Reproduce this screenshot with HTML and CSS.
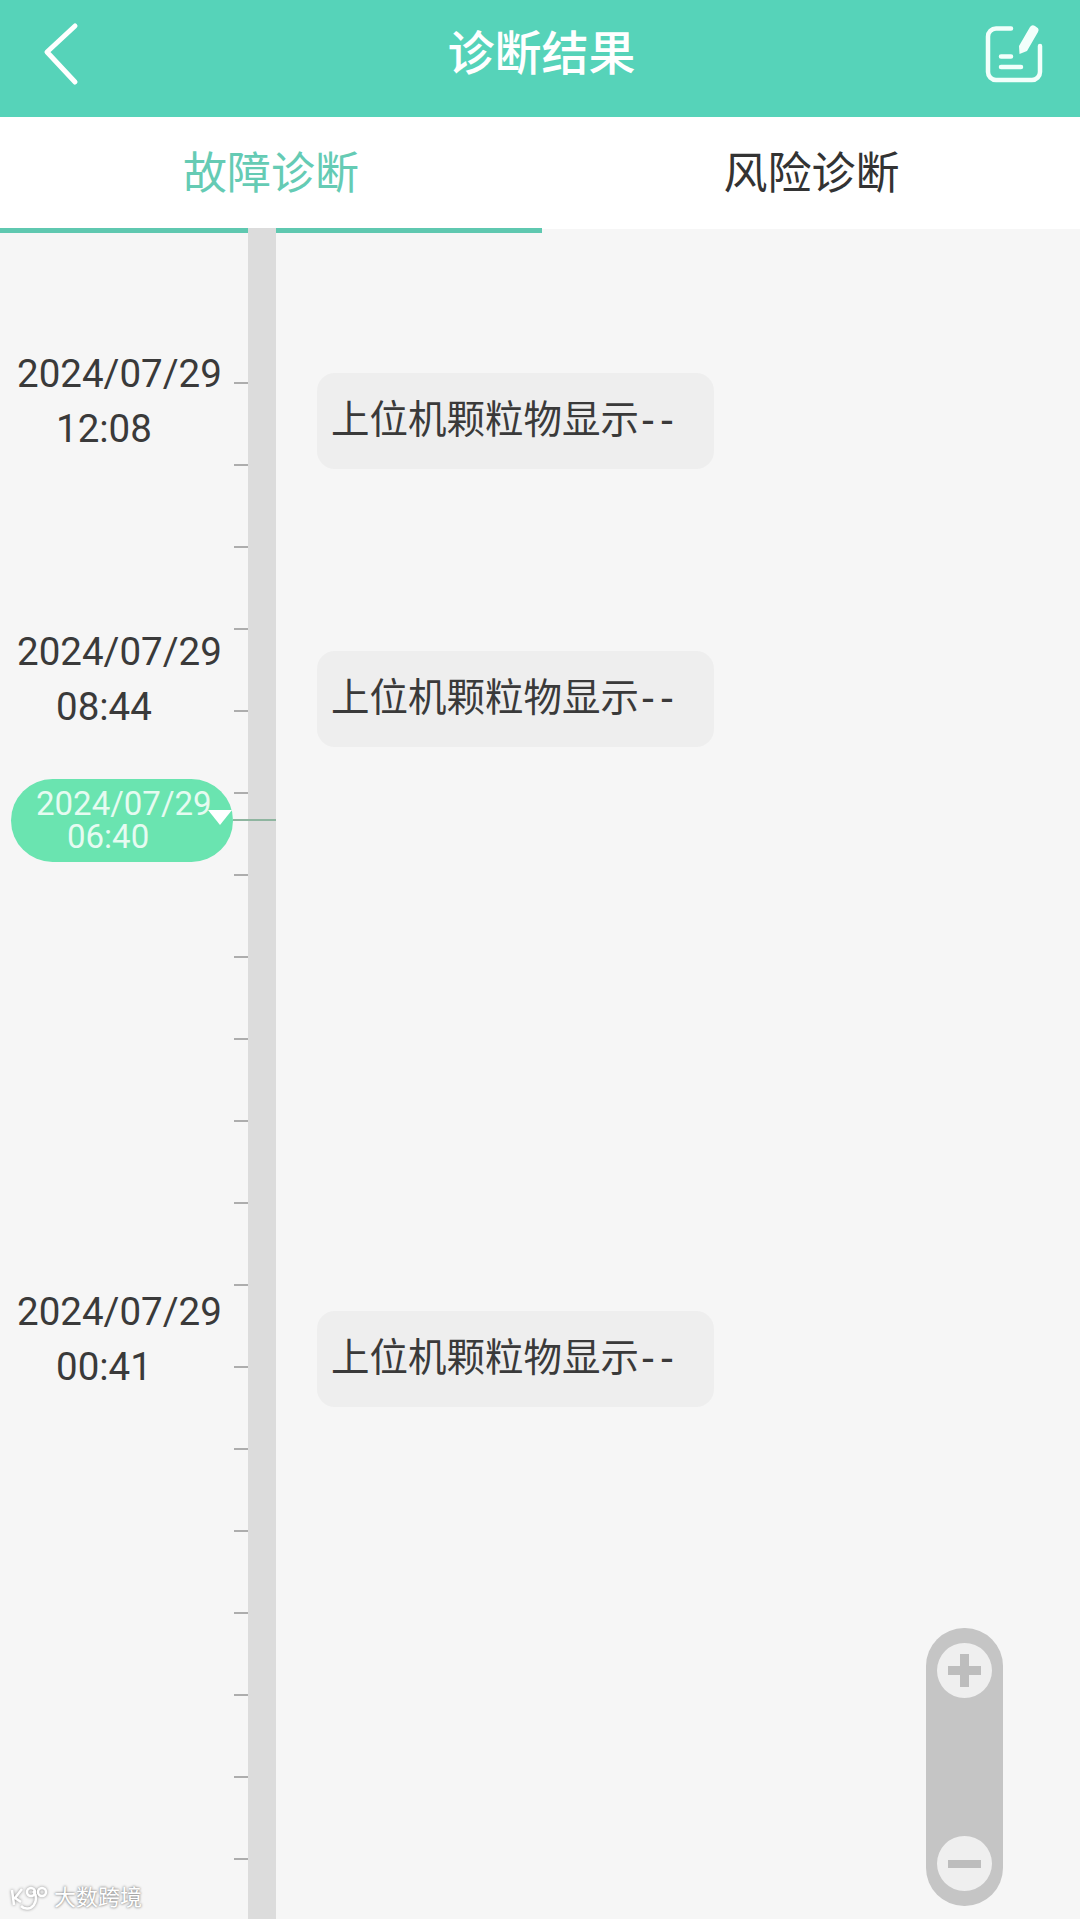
FILE: index.html
```html
<!DOCTYPE html>
<html lang="zh-CN">
<head>
<meta charset="utf-8">
<title>诊断结果</title>
<link rel="stylesheet" href="styles.css">
</head>
<body>
<div class="page">
  <header class="appbar">
    <svg class="back" viewBox="0 0 40 64" aria-hidden="true"><path d="M33 4 L5 30 L33 60"/></svg>
    <h1 class="title">诊断结果</h1>
    <svg class="note" viewBox="0 0 70 70" aria-hidden="true">
      <path class="stroke" d="M30 6.5 H15 a8 8 0 0 0 -8 8 V50 a8 8 0 0 0 8 8 H51 a8 8 0 0 0 8 -8 V24"/>
      <path class="stroke" d="M20 34.5 H30 M20 45 H40"/>
      <path class="fill" d="M38 24 L49 5 Q51 2 54 4 L56 5.500 Q58.500 7 57 10 L46 29 L38.500 32 Z"/>
    </svg>
  </header>
  <nav class="tabs">
    <div class="tab active">故障诊断</div>
    <div class="tab">风险诊断</div>
  </nav>
  <main class="timeline">
    <div class="rail">
      <div class="ticks">
        <i></i><i></i><i></i><i></i><i></i><i></i><i></i><i></i><i></i><i></i>
        <i></i><i></i><i></i><i></i><i></i><i></i><i></i><i></i><i></i>
      </div>
      <div class="bar"></div>
    </div>
    <div class="events">
      <section class="event first">
        <div class="when"><div>2024/07/29</div><div class="clock">12:08</div></div>
        <div class="bubble">上位机颗粒物显示<span class="dash">--</span></div>
      </section>
      <section class="event second">
        <div class="when"><div>2024/07/29</div><div class="clock">08:44</div></div>
        <div class="bubble">上位机颗粒物显示<span class="dash">--</span></div>
      </section>
      <section class="event third">
        <div class="when"><div>2024/07/29</div><div class="clock">00:41</div></div>
        <div class="bubble">上位机颗粒物显示<span class="dash">--</span></div>
      </section>
    </div>
    <div class="pill">
      <div>2024/07/29</div>
      <div class="pill-clock">06:40</div>
      <span class="pointer"></span>
    </div>
    <div class="cursor"></div>
    <div class="zoomer">
      <button class="zoom-btn"><span class="plus"></span></button>
      <button class="zoom-btn"><span class="minus"></span></button>
    </div>
    <div class="mark">
      <svg class="mark-logo" viewBox="0 0 40 26" aria-hidden="true">
        <path d="M3 5 L5 20 M13 4 L6 13 L12 17 M24 6 A8 9 0 1 1 12 21"/>
        <circle cx="22" cy="7" r="4"/>
        <circle cx="33" cy="7" r="4"/>
      </svg>
      <span>大数跨境</span>
    </div>
  </main>
</div>
</body>
</html>
```
FILE: styles.css
```css
* { box-sizing: border-box; }
html, body { margin: 0; padding: 0; }
body {
  width: 1080px;
  height: 1919px;
  overflow: hidden;
  background: #f6f6f6;
  font-family: Roboto, "Noto Sans CJK SC", sans-serif;
  color: #333;
}
.page { width: 1080px; height: 1919px; display: flex; flex-direction: column; overflow: hidden; }

.appbar {
  height: 117px;
  flex: none;
  background: #56d3b9;
  display: flex;
  align-items: center;
  justify-content: space-between;
  padding: 0 29px 0 42px;
  position: relative;
}
.back { width: 40px; height: 64px; margin-top: -9px; fill: none; stroke: #fff; stroke-width: 5; stroke-linecap: round; stroke-linejoin: round; }
.title {
  margin: -10px 0 0 20px;
  font-size: 47px;
  line-height: 60px;
  font-weight: 500;
  color: #fff;
}
.note { width: 70px; height: 70px; margin-top: -3px; }
.note .stroke { fill: none; stroke: #f2fffb; stroke-width: 4.5; stroke-linecap: round; stroke-linejoin: round; }
.note .fill { fill: #f2fffb; }

.tabs { height: 112px; flex: none; display: flex; align-items: flex-start; background: #fff; }
.tab {
  height: 116px;
  text-align: center;
  font-size: 44px;
  line-height: 114px;
  color: #333;
}
.tab.active { color: #65cbb4; border-bottom: 5px solid #5fc8b0; width: 542px; }
.tab:not(.active) { width: 538px; padding-left: 1px; }

.timeline { flex: 1; display: grid; position: relative; }
.rail, .events { grid-area: 1 / 1; }
.rail { display: flex; margin-top: -1px; padding-left: 234px; height: 1691px; }
.ticks { width: 14px; padding-top: 154px; display: flex; flex-direction: column; gap: 80px; }
.ticks i { display: block; height: 2px; flex: none; background: #adadad; }
.bar { width: 28px; background: #dcdcdc; }

.events { display: flex; flex-direction: column; }
.event { display: flex; justify-content: space-between; height: 96px; width: 714px; padding-left: 17px; }
.event.first { margin-top: 144px; }
.event.second { margin-top: 182px; }
.event.third { margin-top: 564px; }
.when { font-size: 38.5px; line-height: 55px; white-space: nowrap; margin-top: -27px; color: #3a3a3a; }
.clock { padding-left: 39px; }
.bubble {
  width: 397px;
  height: 96px;
  padding-left: 14px;
  border-radius: 18px;
  background: #eeeeee;
  font-size: 38.5px;
  line-height: 94px;
  white-space: nowrap;
  color: #3a3a3a;
}
.dash { font-family: "DejaVu Sans", sans-serif; letter-spacing: 5px; margin-left: 2px; }

.pill {
  position: absolute;
  left: 11px;
  top: 550px;
  width: 222px;
  height: 83px;
  padding: 8px 0 0 25px;
  border-radius: 42px;
  background: #6ae4b0;
  color: #e6fbf1;
  font-size: 33px;
  line-height: 33px;
  white-space: nowrap;
}
.pill-clock { padding-left: 31px; }
.pointer {
  position: absolute;
  right: 1px;
  top: 31px;
  width: 0;
  height: 0;
  border-left: 12px solid transparent;
  border-right: 12px solid transparent;
  border-top: 15px solid #fff;
}
.cursor { position: absolute; left: 233px; top: 590px; width: 43px; height: 2px; background: #8fb5a0; }

.zoomer {
  position: absolute;
  left: 926px;
  top: 1399px;
  width: 77px;
  height: 278px;
  padding: 15px 11px;
  border-radius: 38px;
  background: #c5c5c5;
  display: flex;
  flex-direction: column;
  justify-content: space-between;
}
.zoom-btn {
  width: 55px;
  height: 55px;
  padding: 0;
  border: 0;
  border-radius: 50%;
  background: #efefef;
  display: grid;
  place-items: center;
}
.plus, .minus { display: block; width: 33px; height: 8px; background: #bdbdbd; }
.plus { height: 33px; background:
  linear-gradient(#bdbdbd, #bdbdbd) center / 33px 9px no-repeat,
  linear-gradient(#bdbdbd, #bdbdbd) center / 9px 33px no-repeat; }

.mark {
  position: absolute;
  left: 9px;
  top: 1656px;
  display: flex;
  align-items: center;
  gap: 5px;
  font-size: 22px;
  line-height: 26px;
  color: #fff;
  text-shadow: 0 0 3px #8a8a8a, 0 0 2px #9a9a9a;
}
.mark-logo { width: 40px; height: 26px; fill: none; stroke: #fff; stroke-width: 2.5; filter: drop-shadow(0 0 1.5px #8a8a8a); }
```
